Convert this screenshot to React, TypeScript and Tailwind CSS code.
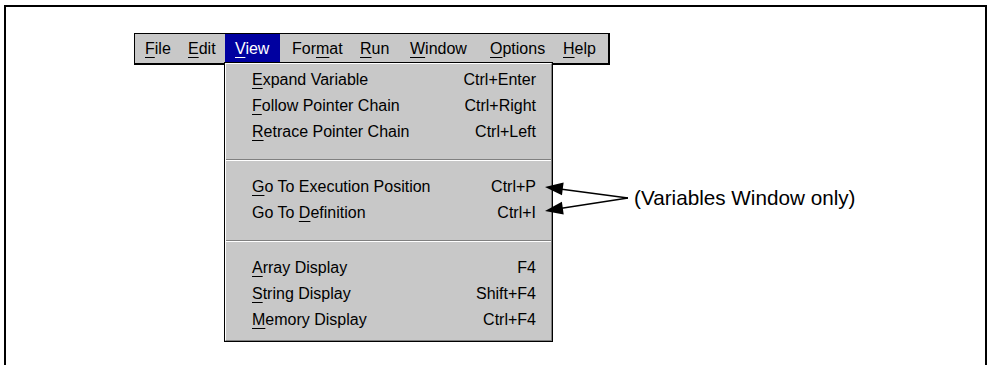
import React from 'react';

type Entry = { label: string; key: number; shortcut: string } | 'sep';

// name, mnemonic index, box classes (widths follow the original spacing)
const MENU_BAR: [string, number, string][] = [
    ['File', 0, 'w-[43px] pl-[10px]'],
    ['Edit', 0, 'w-[47px] pl-[10px]'],
    ['View', 0, 'w-[55px] pl-[10px] bg-[#0000a0] text-white'],
    ['Format', 3, 'w-[70px] pl-[12px]'],
    ['Run', 0, 'w-[50px] pl-[10px]'],
    ['Window', 0, 'w-[80px] pl-[10px]'],
    ['Options', 0, 'w-[73px] pl-[10px]'],
    ['Help', 0, 'pl-[10px]'],
];

const VIEW_MENU: Entry[] = [
    { label: 'Expand Variable', key: 0, shortcut: 'Ctrl+Enter' },
    { label: 'Follow Pointer Chain', key: 0, shortcut: 'Ctrl+Right' },
    { label: 'Retrace Pointer Chain', key: 0, shortcut: 'Ctrl+Left' },
    'sep',
    { label: 'Go To Execution Position', key: 0, shortcut: 'Ctrl+P' },
    { label: 'Go To Definition', key: 6, shortcut: 'Ctrl+I' },
    'sep',
    { label: 'Array Display', key: 0, shortcut: 'F4' },
    { label: 'String Display', key: 0, shortcut: 'Shift+F4' },
    { label: 'Memory Display', key: 0, shortcut: 'Ctrl+F4' },
];

// Text with the mnemonic letter underlined
const Mnemonic: React.FC<{ text: string; index: number }> = ({ text, index }) => (
    <span className="whitespace-pre">
        {text.slice(0, index)}
        <span className="underline underline-offset-[3px] decoration-1">{text[index]}</span>
        {text.slice(index + 1)}
    </span>
);

const Arrows: React.FC = () => (
    <svg
        className="absolute left-0 top-0 pointer-events-none"
        width={988}
        height={365}
        viewBox="0 0 988 365"
    >
        <line x1={628} y1={198} x2={560} y2={189} stroke="#000" strokeWidth={1.4} />
        <line x1={628} y1={198} x2={560} y2={208.5} stroke="#000" strokeWidth={1.4} />
        <polygon points="545,187 563.6,182.4 562,195.3" fill="#000" />
        <polygon points="545,211 563.7,214.6 561.9,201.8" fill="#000" />
    </svg>
);

export default function App() {
    return (
        <div className="relative h-[365px] overflow-hidden bg-white pt-[5px] pl-[4px] pr-[1px] font-['Liberation_Sans',Arial,sans-serif] text-black">
            <div className="h-[420px] border-2 border-black">
                {/* Menu bar */}
                <div className="relative ml-[128px] mt-[26px] w-[476px]">
                    <div className="flex h-[32px] items-stretch border-t border-l border-r-2 border-b-2 border-black bg-[#c8c8c8] text-[16px]">
                        {MENU_BAR.map(([name, idx, cls]) => (
                            <div key={name} className={`flex h-[29px] shrink-0 items-center ${cls}`}>
                                <Mnemonic text={name} index={idx} />
                            </div>
                        ))}
                    </div>

                    {/* View dropdown */}
                    <div className="absolute left-[90px] top-[29px] w-[329px] border border-black bg-[#c8c8c8]">
                        <div className="border-t border-l border-white border-r border-b border-r-[#808080] border-b-[#808080] pt-[3px] pb-[7px] text-[16px]">
                            {VIEW_MENU.map((item, i) =>
                                item === 'sep' ? (
                                    <div key={i} className="flex h-[29px] items-center">
                                        <div className="h-[2px] w-full border-t border-[#808080] border-b border-b-white" />
                                    </div>
                                ) : (
                                    <div
                                        key={i}
                                        className="flex h-[26px] items-center justify-between pl-[26px] pr-[15px]"
                                    >
                                        <Mnemonic text={item.label} index={item.key} />
                                        <span>{item.shortcut}</span>
                                    </div>
                                )
                            )}
                        </div>
                    </div>
                </div>
            </div>

            <Arrows />
            <div className="absolute left-[634px] top-[185px] text-[20.7px] leading-[26px]">
                (Variables Window only)
            </div>
        </div>
    );
}
